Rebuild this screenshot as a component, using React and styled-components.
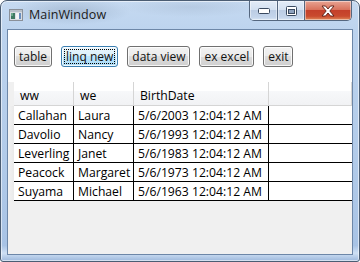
import React from "react";
import styled, { createGlobalStyle } from "styled-components";

const Global = createGlobalStyle`
  html, body {
    margin:0;
    padding:0;
    background:#ffffff;
    overflow:hidden;
  }
  body {
    font-family:"Open Sans", "Noto Sans", sans-serif;
  }
`;

const Window = styled.div`
  width:360px;
  height:262px;
  box-sizing:border-box;
  border:1px solid #4b5d73;
  border-radius:7px 7px 3px 3px;
  display:flex;
  flex-direction:column;
  background:
    radial-gradient(ellipse 60px 14px at 70px 10px, rgba(120,140,165,0.35), transparent),
    radial-gradient(ellipse 70px 10px at 190px 6px, rgba(140,160,185,0.25), transparent),
    linear-gradient(180deg, #c6daf1 0%, #bcd3ee 12%, #b2cbe9 60%, #a8c3e5 94%, #cfe0f4 97%, #9db8dc 100%);
  box-shadow:inset 0 0 0 1px rgba(255,255,255,0.55);
  overflow:hidden;
`;

const TitleBar = styled.div`
  height:28px;
  display:flex;
  align-items:flex-start;
  padding-left:8px;
`;

const AppIcon = styled.svg`
  margin-top:8px;
  width:14px;
  height:12px;
  flex:none;
`;

const Title = styled.span`
  margin-left:6px;
  margin-top:5px;
  font-size:12.5px;
  color:#1a1a1a;
  letter-spacing:0.1px;
`;

const CaptionGroup = styled.div`
  margin-left:auto;
  margin-right:7px;
  display:flex;
  height:19px;
  border:1px solid #55677f;
  border-top:none;
  border-radius:0 0 5px 5px;
  overflow:hidden;
`;

const CaptionButton = styled.div`
  width:${p => p.$w}px;
  height:19px;
  display:flex;
  align-items:center;
  justify-content:center;
  border-left:${p => (p.$first ? "none" : "1px solid #55677f")};
  box-shadow:inset 0 0 0 1px rgba(255,255,255,0.45);
  background:${p =>
    p.$close
      ? "linear-gradient(180deg, #e8a493 0%, #d9735d 45%, #c4402a 50%, #c94a2e 80%, #e08a5a 100%)"
      : "linear-gradient(180deg, #e3ecf7 0%, #d4e1f1 45%, #bccde4 50%, #c4d5eb 85%, #d9e6f5 100%)"};
`;

const Client = styled.div`
  flex:1;
  margin:0 6px 6px 6px;
  border:1px solid #6d87a8;
  background:#ffffff;
  display:flex;
  flex-direction:column;
  min-height:0;
`;

const Toolbar = styled.div`
  display:flex;
  align-items:center;
  gap:9px;
  padding:16px 0 0 6px;
  height:21px;
  margin-bottom:15px;
`;

const Button = styled.button`
  position:relative;
  margin:0;
  height:21px;
  padding:0 4px;
  box-sizing:border-box;
  font-family:"Open Sans", "Noto Sans", sans-serif;
  font-size:12px;
  color:#111;
  border-radius:3px;
  border:1px solid ${p => (p.$focused ? "#3c7fb1" : "#707070")};
  box-shadow:inset 0 0 0 1px rgba(255,255,255,0.8);
  background:${p =>
    p.$focused
      ? "linear-gradient(180deg, #eaf6fd 0%, #d9f0fc 50%, #bee6fd 50%, #a7d9f5 100%)"
      : "linear-gradient(180deg, #f2f2f2 0%, #ebebeb 50%, #dddddd 50%, #cfcfcf 100%)"};
  line-height:19px;
  &::after {
    content:"";
    display:${p => (p.$focused ? "block" : "none")};
    position:absolute;
    inset:2px;
    border:1px dotted #000;
  }
`;

const Grid = styled.div`
  flex:1;
  background:#f0f0f0;
  display:grid;
  grid-template-columns:6px 60px 60px 135px 1fr;
  grid-auto-rows:19px;
  grid-template-rows:24px;
  align-content:start;
  font-size:12.2px;
  color:#000;
`;

const Corner = styled.div`
  background:#f0f0f0;
`;

const HeaderCell = styled.div`
  background:linear-gradient(180deg, #ffffff 0%, #ffffff 40%, #f7f8fa 41%, #f1f2f4 100%);
  border-bottom:1px solid #d5d5d5;
  border-right:1px solid #d5d5d5;
  padding:3px 0 0 6px;
  display:flex;
  align-items:center;
  white-space:nowrap;
`;

const RowHeader = styled.div`
  background:linear-gradient(90deg, #f3f3f3, #e9e9e9);
`;

const Cell = styled.div`
  background:#ffffff;
  border-bottom:1px solid #000;
  border-right:${p => (p.$last ? "none" : "1px solid #000")};
  padding-left:4px;
  display:flex;
  align-items:center;
  white-space:nowrap;
  overflow:hidden;
`;

const rows = [
  ["Callahan", "Laura", "5/6/2003 12:04:12 AM"],
  ["Davolio", "Nancy", "5/6/1993 12:04:12 AM"],
  ["Leverling", "Janet", "5/6/1983 12:04:12 AM"],
  ["Peacock", "Margaret", "5/6/1973 12:04:12 AM"],
  ["Suyama", "Michael", "5/6/1963 12:04:12 AM"],
];

const App = () => {
  return (
    <>
      <Global />
      <Window>
        <TitleBar>
          <AppIcon viewBox="0 0 14 12">
            <rect x="0.5" y="0.5" width="13" height="11" fill="#d9dde2" stroke="#8a9099" />
            <rect x="1" y="1" width="12" height="2" fill="#b8c0ca" />
            <rect x="2" y="4" width="4" height="6" fill="#3f7a63" />
            <rect x="2" y="4" width="2" height="3" fill="#6aa88c" />
            <rect x="7" y="4" width="5" height="6" fill="#f4f5f7" />
            <rect x="10" y="4" width="2" height="6" fill="#6b8fbf" />
          </AppIcon>
          <Title>MainWindow</Title>
          <CaptionGroup>
            <CaptionButton $w={27} $first>
              <svg width="12" height="6" viewBox="0 0 12 6">
                <rect x="0.5" y="0.5" width="11" height="5" rx="1" fill="#fff" stroke="#3a4a60" />
              </svg>
            </CaptionButton>
            <CaptionButton $w={26}>
              <svg width="11" height="10" viewBox="0 0 11 10">
                <rect x="0.5" y="0.5" width="10" height="9" rx="1" fill="#fff" stroke="#3a4a60" />
                <rect x="2.5" y="3.5" width="6" height="4" fill="#8fa3bf" stroke="#3a4a60" />
              </svg>
            </CaptionButton>
            <CaptionButton $w={46} $close>
              <svg width="14" height="12" viewBox="0 0 14 12">
                <path d="M1 1 L4.5 1 L7 4 L9.5 1 L13 1 L8.8 6 L13 11 L9.5 11 L7 8 L4.5 11 L1 11 L5.2 6 Z"
                  fill="#fff" stroke="#5a1e14" strokeWidth="0.9" strokeLinejoin="round" />
              </svg>
            </CaptionButton>
          </CaptionGroup>
        </TitleBar>
        <Client>
          <Toolbar>
            <Button>table</Button>
            <Button $focused>linq new</Button>
            <Button>data view</Button>
            <Button>ex excel</Button>
            <Button>exit</Button>
          </Toolbar>
          <Grid>
            <Corner />
            <HeaderCell>ww</HeaderCell>
            <HeaderCell>we</HeaderCell>
            <HeaderCell>BirthDate</HeaderCell>
            <HeaderCell />
            {rows.map(r => (
              <React.Fragment key={r[0]}>
                <RowHeader />
                <Cell>{r[0]}</Cell>
                <Cell>{r[1]}</Cell>
                <Cell>{r[2]}</Cell>
                <Cell $last />
              </React.Fragment>
            ))}
          </Grid>
        </Client>
      </Window>
    </>
  );
};

export default App;
